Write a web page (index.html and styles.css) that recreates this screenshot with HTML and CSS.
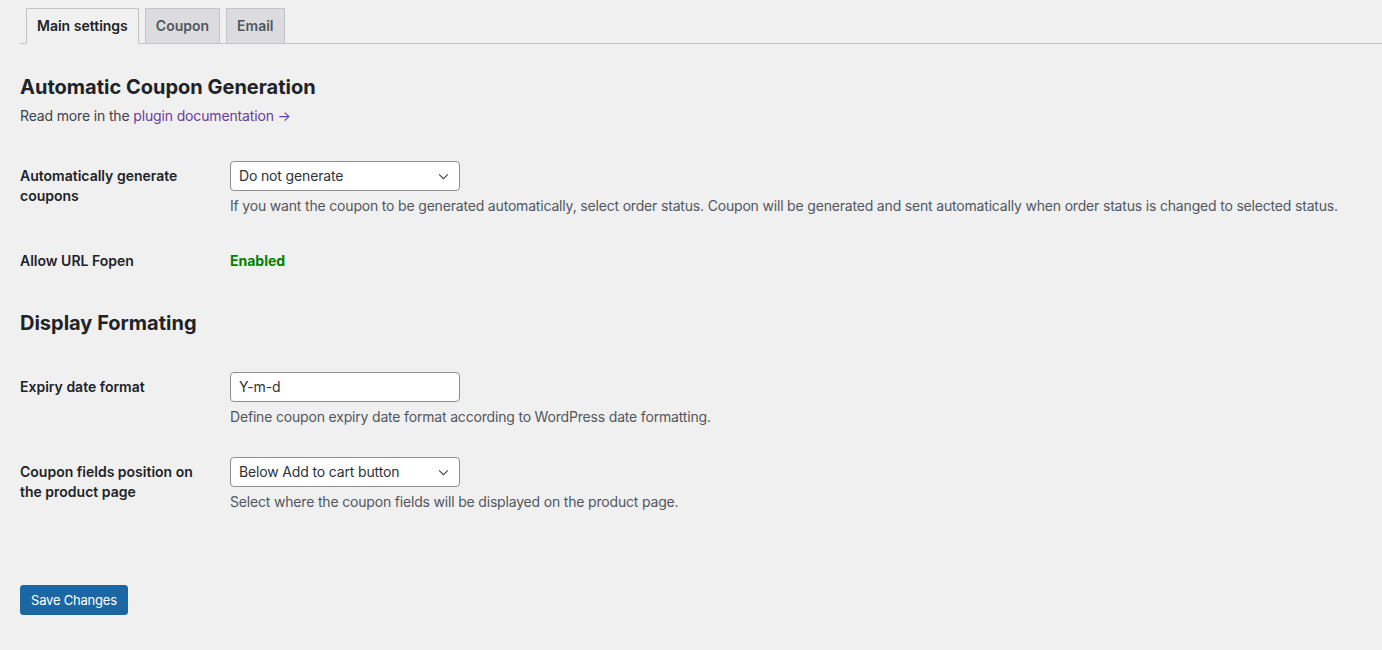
FILE: index.html
```html
<!DOCTYPE html>
<html>
<head>
<meta charset="utf-8">
<link rel="stylesheet" href="styles.css">
</head>
<body>
<div class="wrap">
  <nav class="tabs">
    <a class="tab tab-active">Main settings</a>
    <a class="tab">Coupon</a>
    <a class="tab">Email</a>
  </nav>

  <h2 class="section-title first">Automatic Coupon Generation</h2>
  <p class="intro">Read more in the <a class="doc-link">plugin documentation →</a></p>

  <div class="form-table">
    <div class="row">
      <div class="label">Automatically generate coupons</div>
      <div class="field">
        <div class="select"><span>Do not generate</span><svg class="chev" viewBox="0 0 12 8" width="11" height="7"><path d="M1 1.5 L6 6.5 L11 1.5" fill="none" stroke="#3c434a" stroke-width="1.2"/></svg></div>
        <p class="desc">If you want the coupon to be generated automatically, select order status. Coupon will be generated and sent automatically when order status is changed to selected status.</p>
      </div>
    </div>
    <div class="row">
      <div class="label">Allow URL Fopen</div>
      <div class="field field-plain"><span class="enabled">Enabled</span></div>
    </div>
  </div>

  <h2 class="section-title second">Display Formating</h2>

  <div class="form-table">
    <div class="row">
      <div class="label">Expiry date format</div>
      <div class="field">
        <div class="input">Y-m-d</div>
        <p class="desc">Define coupon expiry date format according to WordPress date formatting.</p>
      </div>
    </div>
    <div class="row">
      <div class="label">Coupon fields position on the product page</div>
      <div class="field">
        <div class="select"><span>Below Add to cart button</span><svg class="chev" viewBox="0 0 12 8" width="11" height="7"><path d="M1 1.5 L6 6.5 L11 1.5" fill="none" stroke="#3c434a" stroke-width="1.2"/></svg></div>
        <p class="desc">Select where the coupon fields will be displayed on the product page.</p>
      </div>
    </div>
  </div>

  <div class="submit"><button class="button-primary">Save Changes</button></div>
</div>
</body>
</html>
```

FILE: styles.css
```css
html, body {
  margin: 0;
  padding: 0;
  background: #f0f0f1;
}
body {
  font-family: Inter, "Noto Sans", "Liberation Sans", sans-serif;
  font-size: 14px;
  color: #3c434a;
  height: 650px;
  overflow: hidden;
}
.wrap {
  padding: 9px 0 0 20px;
}
.tabs {
  display: flex;
  border-bottom: 1px solid #c3c4c7;
  padding-left: 6px;
  height: 35px;
  box-sizing: border-box;
  align-items: flex-end;
}
.tab {
  display: block;
  box-sizing: border-box;
  height: 36px;
  margin-bottom: -1px;
  margin-right: 6px;
  padding: 5px 10px;
  border: 1px solid #c3c4c7;
  background: #dcdcde;
  color: #50575e;
  font-size: 14px;
  font-weight: 600;
  line-height: 24px;
}
.tab-active {
  background: #f0f0f1;
  border-bottom-color: #f0f0f1;
  color: #1d2327;
}
.section-title {
  margin: 0;
  font-size: 20px;
  font-weight: 700;
  line-height: 26px;
  color: #1d2327;
}
.section-title.first {
  margin-top: 30px;
}
.section-title.second {
  margin-top: 19px;
  margin-bottom: 21px;
}
.intro {
  margin: 5px 0 20px;
  font-size: 14px;
  line-height: 21px;
  letter-spacing: -0.15px;
  color: #3c434a;
}
.doc-link {
  color: #6b3d9a;
  text-decoration: none;
}
.row {
  display: flex;
}
.label {
  width: 190px;
  flex: none;
  padding: 20px 20px 20px 0;
  font-weight: 600;
  font-size: 14px;
  line-height: 20px;
  color: #1d2327;
}
.field {
  flex: 1;
  min-width: 0;
  padding: 15px 10px 15px 0;
  line-height: 20px;
}
.field-plain {
  padding-top: 20px;
}
.select, .input {
  box-sizing: border-box;
  width: 230px;
  height: 30px;
  border: 1px solid #8c8f94;
  border-radius: 4px;
  background: #fff;
  color: #2c3338;
  padding: 0 8px;
  display: flex;
  align-items: center;
  justify-content: space-between;
  font-size: 14px;
  letter-spacing: -0.15px;
}
.chev {
  margin-right: 2px;
}
.desc {
  margin: 5px 0 0;
  font-size: 14px;
  line-height: 20px;
  letter-spacing: -0.18px;
  color: #50575e;
}
.enabled {
  color: green;
  font-weight: 700;
}
.submit {
  margin-top: 58px;
}
.button-primary {
  box-sizing: border-box;
  height: 30px;
  padding: 0 10px;
  background: #1a67a3;
  border: 1px solid #1a67a3;
  border-radius: 3px;
  color: #fff;
  font-family: inherit;
  font-size: 13px;
  letter-spacing: -0.2px;
  line-height: 28px;
}
```
